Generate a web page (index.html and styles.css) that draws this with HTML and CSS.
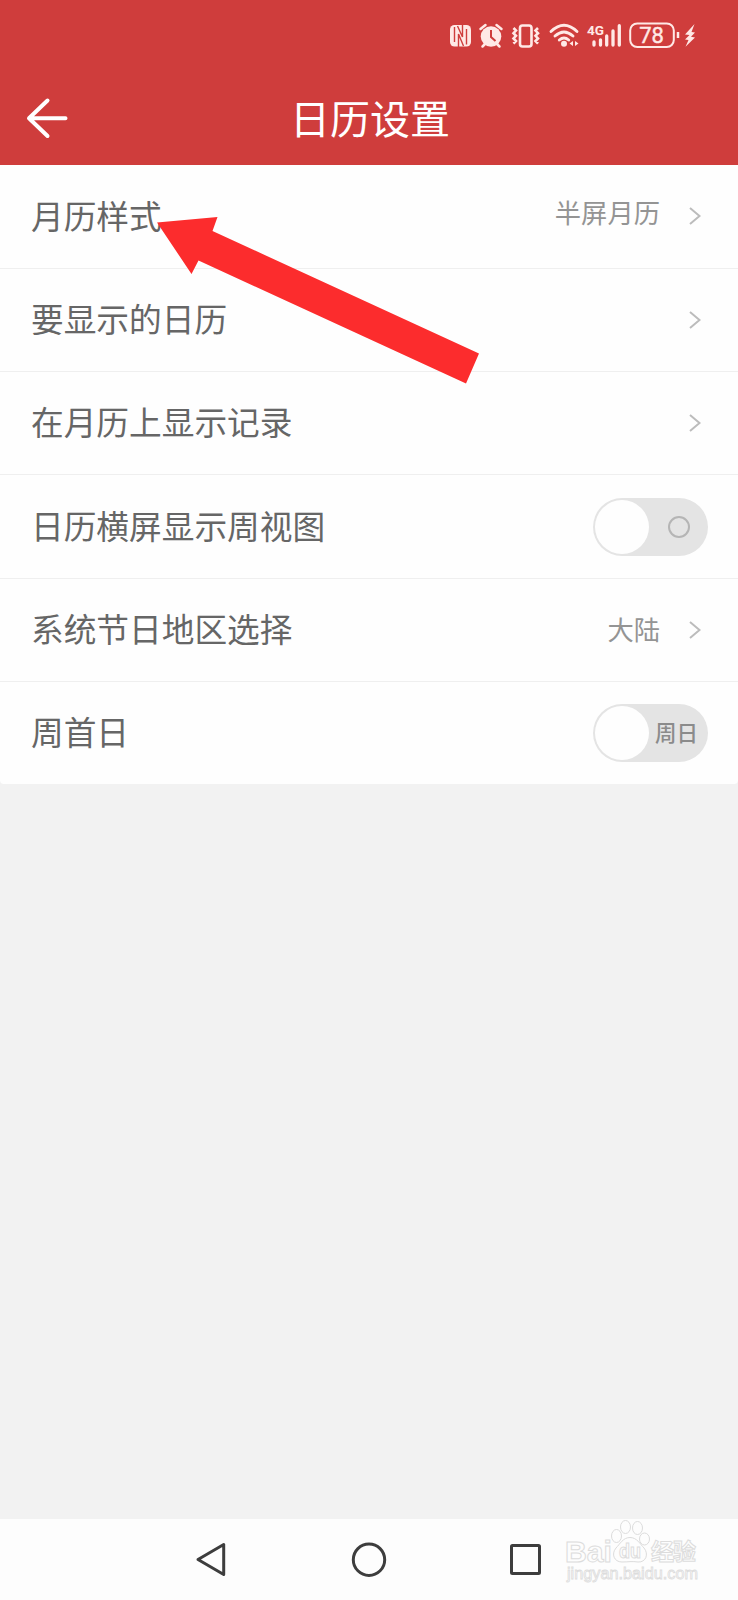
FILE: index.html
```html
<!DOCTYPE html>
<html lang="zh-CN">
<head>
<meta charset="utf-8">
<title>日历设置</title>
<link rel="stylesheet" href="styles.css">
</head>
<body>
<div class="screen">
  <header class="header">
    <div class="status">
      <svg width="260" height="40" viewBox="440 16 260 40" fill="none" stroke="#ffe9e6" stroke-width="2">
        <!-- NFC -->
        <rect x="450" y="25" width="21" height="21.500" rx="4.500" fill="#ffe9e6" stroke="none"/>
        <path d="M454.500 27V42M466.500 29V44.500M458.500 47V34L463.500 46M462.500 24V37L457.500 26" stroke="#cf3d3c" stroke-width="1.400"/>
        <!-- alarm -->
        <circle cx="491" cy="36.500" r="10.300" fill="#ffe9e6" stroke="none"/>
        <path d="M480.500 29l5-4M501.500 29l-5-4M485 44l-2.500 2.500M497 44l2.500 2.500" stroke-width="2.500" stroke-linecap="round"/>
        <path d="M491 30v7l4.500 4" stroke="#cf3d3c"/>
        <!-- vibrate -->
        <rect x="520" y="25.500" width="11.500" height="21" rx="2.500" stroke-width="2.600"/>
        <path d="M513.500 28l2.500 2.600-2.500 2.600 2.500 2.600-2.500 2.600 2.500 2.600-2.500 2.600M538 28l-2.500 2.600 2.500 2.600-2.500 2.600 2.500 2.600-2.500 2.600 2.500 2.600" stroke-width="2.600"/>
        <!-- wifi -->
        <g stroke-width="2.900" stroke-linecap="round"><path d="M551 31.500q13-12.500 26 0M555 36q9-8.200 18 0M559.300 40q4.700-4 9.400 0"/></g>
        <circle cx="564" cy="43.700" r="3" fill="#ffe9e6" stroke="none"/>
        <path d="M573 41v5l-3.500-2.500zM575 41v5l3.500-2.500z" fill="#ffe9e6" stroke="none"/>
        <!-- signal -->
        <g stroke-width="3.300" stroke-linecap="round"><path d="M594 42v3M600.500 40v5M606.700 36v9M613 31v14M619.300 25.700v19.300"/></g>
        <text class="network" x="587" y="35" textLength="17" lengthAdjust="spacingAndGlyphs">4G</text>
        <!-- battery -->
        <rect x="630.200" y="23.500" width="43.600" height="23.500" rx="7"/>
        <text class="battery" x="651.500" y="43">78</text>
        <path d="M678 32v6" stroke-width="2.500"/>
        <path d="M694.500 24L685 34.500l4.500.5-4.500 4.500 3.500.5-3 6.800 9.500-9.300-4-.8 4-4.200-3.500-.5z" fill="#ffe9e6" stroke="none"/>
      </svg>
    </div>
    <div class="titlebar">
      <svg class="back" width="44" height="44" viewBox="0 0 44 44"><path d="M23.500 3.500L5 21.300L23.500 39M5.500 21.300H41.500"/></svg>
      <h1 class="title">日历设置</h1>
    </div>
  </header>

  <main class="list">
    <div class="row"><span class="label">月历样式</span><span class="value raised">半屏月历</span><svg class="chevron" width="12" height="18" viewBox="0 0 12 18"><path d="M1 1l9.500 8L1 17"/></svg></div>
    <div class="row"><span class="label">要显示的日历</span><svg class="chevron" width="12" height="18" viewBox="0 0 12 18"><path d="M1 1l9.500 8L1 17"/></svg></div>
    <div class="row"><span class="label">在月历上显示记录</span><svg class="chevron" width="12" height="18" viewBox="0 0 12 18"><path d="M1 1l9.500 8L1 17"/></svg></div>
    <div class="row"><span class="label">日历横屏显示周视图</span><div class="switch"><span class="knob"></span><span class="off"></span></div></div>
    <div class="row"><span class="label">系统节日地区选择</span><span class="value">大陆</span><svg class="chevron" width="12" height="18" viewBox="0 0 12 18"><path d="M1 1l9.500 8L1 17"/></svg></div>
    <div class="row"><span class="label">周首日</span><div class="switch"><span class="knob"></span><span class="day">周日</span></div></div>
  </main>

  <nav class="nav">
    <svg width="738" height="81" viewBox="0 1519 738 81">
      <path d="M223.700 1544.500V1574.500L198 1559.500Z"/>
      <circle cx="369" cy="1559.700" r="15.700"/>
      <rect x="511.500" y="1545.500" width="28" height="28" rx="1"/>
    </svg>
  </nav>

  <svg class="arrow" width="322" height="176" viewBox="157 213 322 176"><path d="M157 222.500L217.500 217L212.500 231L479 353.500L466 383.500L198.500 260.500L191.500 274Z"/></svg>

  <svg class="watermark" width="150" height="70" viewBox="560 1516 150 70">
    <text class="brand" x="565" y="1561.500" textLength="47" lengthAdjust="spacingAndGlyphs">Bai</text>
    <path class="paw" d="M630 1537.500C623 1537.500 620 1544 616 1548C611 1554 614 1562 622 1562C628 1562 632 1561 638 1562C646 1562.500 649 1554 644 1548C640 1544 637 1537.500 630 1537.500Z"/>
    <g class="paw"><ellipse cx="616.500" cy="1536" rx="5" ry="6.500"/><ellipse cx="625.500" cy="1527" rx="5" ry="6.500"/><ellipse cx="637.500" cy="1528" rx="5" ry="6.500"/><ellipse cx="644.500" cy="1539" rx="5" ry="6"/></g>
    <text class="du" x="619" y="1558" textLength="22" lengthAdjust="spacingAndGlyphs">du</text>
    <text class="exp" x="651" y="1560" textLength="45">经验</text>
    <text class="site" x="567" y="1579" textLength="131" lengthAdjust="spacingAndGlyphs">jingyan.baidu.com</text>
  </svg>
</div>
</body>
</html>
```
FILE: styles.css
```css
* { box-sizing: border-box; }
body {
  margin: 0;
  font-family: "Noto Sans CJK SC", sans-serif;
  background: #f2f2f2;
}
.screen {
  position: relative;
  width: 738px;
  height: 1600px;
  display: flex;
  flex-direction: column;
  overflow: hidden;
}
.header { height: 165px; background: #cf3d3c; flex: none; }
.status {
  height: 72px;
  padding: 16px 38px 0 0;
  display: flex;
  justify-content: flex-end;
  align-items: flex-start;
}
.network { font: bold 13.5px Roboto, sans-serif; fill: #ffe9e6; stroke: none; }
.battery { font: 22px Roboto, sans-serif; fill: #ffe9e6; stroke: #ffe9e6; stroke-width: .4; text-anchor: middle; }
.titlebar {
  height: 93px;
  display: grid;
  grid-template-columns: 92px 1fr 92px;
  align-items: center;
  padding-left: 2px;
}
.back { margin-left: 22px; fill: none; stroke: #fff; stroke-width: 4; stroke-linecap: round; stroke-linejoin: round; }
.title {
  margin: 0;
  padding-bottom: 4px;
  color: #fff;
  font-size: 40px;
  line-height: 60px;
  font-weight: 400;
  text-align: center;
}
.list {
  flex: none;
  height: 619px;
  display: grid;
  grid-template-rows: 104px 103px 103px 104px 103px 102px;
  background: #fefefe;
  border-radius: 0 0 4px 4px;
}
.row {
  display: flex;
  align-items: center;
  padding: 0 30px 0 31px;
  border-bottom: 1px solid #efefef;
}
.row:last-child { border-bottom: 0; }
.label { flex: 1; padding-bottom: 4px; font-size: 32.7px; line-height: 48px; color: #666; }
.value { padding-bottom: 2px; font-size: 26.3px; line-height: 40px; color: #949494; margin-right: 29px; }
.raised { padding-bottom: 9px; }
.chevron { margin: 0 7px 1px 0; fill: none; stroke: #bcbcbc; stroke-width: 2; }
.switch {
  width: 115px;
  height: 58px;
  padding: 2px;
  border-radius: 29px;
  background: #e4e4e4;
  display: flex;
  align-items: center;
}
.knob { width: 54px; height: 54px; border-radius: 50%; background: #fefefe; flex: none; }
.off { width: 22px; height: 22px; border: 2px solid #b5b5b5; border-radius: 50%; margin-left: 19px; }
.day { margin-left: 6px; padding-bottom: 3px; font-size: 21.5px; line-height: 30px; font-weight: 500; color: #8b8b8b; white-space: nowrap; }
.nav { margin-top: auto; height: 81px; background: #fdfdfd; }
.nav svg { display: block; fill: none; stroke: #3d3d3d; stroke-width: 3; stroke-linejoin: round; }
.arrow { position: absolute; left: 157px; top: 213px; fill: #fc2c2d; }
.watermark { position: absolute; left: 560px; top: 1516px; fill: #fdfdfd; stroke: #dcdcdc; stroke-width: 1; }
.brand { font: bold 30px "Liberation Sans", sans-serif; }
.du { font: bold 20px "Liberation Sans", sans-serif; }
.exp { font: bold 23px "Noto Sans CJK SC", sans-serif; }
.site { font: 16px "Liberation Sans", sans-serif; stroke-width: .8; }
```
